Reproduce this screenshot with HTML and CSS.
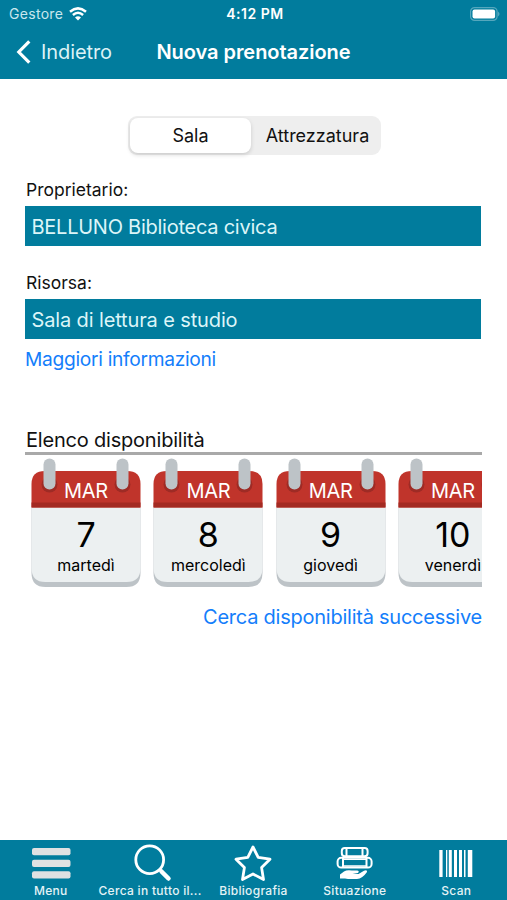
FILE: index.html
```html
<!DOCTYPE html>
<html lang="it">
<head>
    <meta charset="UTF-8">
    <meta name="viewport" content="width=device-width, initial-scale=1.0">
    <title>Nuova prenotazione</title>
    <link rel="stylesheet" href="styles.css">
</head>
<body>
    <!-- Calendar page shared by all the days -->
    <svg class="defs" width="0" height="0">
        <symbol id="calendar" viewBox="0 0 110 130">
            <path d="M0.5 50H109.5V115Q109.5 129 95.5 129H14.5Q0.5 129 0.5 115Z" fill="#bdc3c7"/>
            <path d="M0.5 49H109.5V110Q109.5 124 95.5 124H14.5Q0.5 124 0.5 110Z" fill="#ecf0f1"/>
            <path d="M14 13H96Q109.5 13 109.5 26V49.5H0.5V26Q0.5 13 14 13Z" fill="#c0342b"/>
            <path d="M0.5 44.5H109.5V49.5H0.5Z" fill="#a32a22"/>
            <circle cx="18.5" cy="26.5" r="8" fill="#9e2b25"/>
            <circle cx="91.5" cy="26.5" r="8" fill="#9e2b25"/>
            <rect x="12.5" y="0.5" width="12" height="31" rx="6" fill="#bdc3c7"/>
            <rect x="85.5" y="0.5" width="12" height="31" rx="6" fill="#bdc3c7"/>
        </symbol>
    </svg>

    <div class="app">
        <header class="header">
            <div class="status">
                <div class="carrier">
                    <span class="carrier-name">Gestore</span>
                    <svg width="18" height="14" viewBox="0 0 18 14" fill="none" stroke="#fff" stroke-width="2.5">
                        <path d="M1 4.7Q9 -2 17 4.7M3.9 8Q9 3.6 14.1 8"/>
                        <path d="M9 13.5L6 10.4Q9 8 12 10.4Z" fill="#fff" stroke="none"/>
                    </svg>
                </div>
                <span class="time">4:12 PM</span>
                <svg class="battery" width="31" height="14" viewBox="0 0 31 14">
                    <rect x="0.6" y="0.6" width="26.5" height="12.8" rx="4" fill="none" stroke="#55a7bd" stroke-width="1.2"/>
                    <rect x="2.5" y="2.5" width="22.6" height="9" rx="2" fill="#fff"/>
                    <path d="M28.3 4.5Q30.5 7 28.3 9.5Z" fill="#74b8cb"/>
                </svg>
            </div>
            <div class="nav">
                <div class="back">
                    <svg width="16" height="24" viewBox="0 0 16 24" fill="none" stroke="#fff" stroke-width="3.2">
                        <path d="M13.3 1.3L2.8 12L13.3 22.7"/>
                    </svg>
                    <span>Indietro</span>
                </div>
                <h1>Nuova prenotazione</h1>
                <div></div>
            </div>
        </header>

        <main class="content">
            <div class="segmented">
                <div class="segment active">Sala</div>
                <div class="segment">Attrezzatura</div>
            </div>

            <div class="label">Proprietario:</div>
            <div class="field"><span class="owner">BELLUNO Biblioteca civica</span></div>
            <div class="label second">Risorsa:</div>
            <div class="field"><span class="resource">Sala di lettura e studio</span></div>
            <div class="info"><a href="#">Maggiori informazioni</a></div>

            <h2>Elenco disponibilità</h2>
            <div class="days">
                <div class="day">
                    <svg class="page"><use href="#calendar"/></svg>
                    <span class="month">MAR</span>
                    <span class="number">7</span>
                    <span class="weekday">martedì</span>
                </div>
                <div class="day">
                    <svg class="page"><use href="#calendar"/></svg>
                    <span class="month">MAR</span>
                    <span class="number">8</span>
                    <span class="weekday">mercoledì</span>
                </div>
                <div class="day">
                    <svg class="page"><use href="#calendar"/></svg>
                    <span class="month">MAR</span>
                    <span class="number">9</span>
                    <span class="weekday">giovedì</span>
                </div>
                <div class="day">
                    <svg class="page"><use href="#calendar"/></svg>
                    <span class="month">MAR</span>
                    <span class="number">10</span>
                    <span class="weekday">venerdì</span>
                </div>
            </div>
            <div class="more"><a href="#">Cerca disponibilità successive</a></div>
        </main>

        <footer class="tabbar">
            <div class="tab">
                <svg width="40" height="40" viewBox="0 0 40 40" fill="#e0e1e2">
                    <rect x="1" y="5" width="38.5" height="7.3" rx="2"/>
                    <rect x="1" y="16.7" width="38.5" height="7.3" rx="2"/>
                    <rect x="1" y="28.2" width="38.5" height="7.3" rx="2"/>
                </svg>
                <span>Menu</span>
            </div>
            <div class="tab">
                <svg width="40" height="40" viewBox="0 0 40 40" fill="none" stroke="#fff">
                    <circle cx="17.7" cy="16.7" r="13.9" stroke-width="2.8"/>
                    <path d="M27.5 26.5L30 29" stroke-width="2.5"/>
                    <path d="M29.5 28.5L36.5 35.5" stroke-width="4.5" stroke-linecap="round"/>
                </svg>
                <span class="search-label">Cerca in tutto il...</span>
            </div>
            <div class="tab">
                <svg width="40" height="40" viewBox="0 0 40 40" fill="none" stroke="#fff" stroke-width="2.8" stroke-linejoin="round">
                    <path d="M20 4L25.2 14.4L37 16.2L28.6 24.6L30.5 36.5L20 31L9.5 36.5L11.4 24.6L3 16.2L14.8 14.4Z"/>
                </svg>
                <span>Bibliografia</span>
            </div>
            <div class="tab">
                <svg width="40" height="40" viewBox="0 0 40 40" fill="none" stroke="#fff" stroke-width="2">
                    <rect x="6.8" y="5" width="25.8" height="8.2" rx="3"/>
                    <path d="M11.5 5V13M27.5 5V13"/>
                    <rect x="2.6" y="14.8" width="34" height="9.8" rx="3.6"/>
                    <path d="M8 15V24.5M31.5 15V24.5"/>
                    <path d="M8 16.4H31.5M8 23H31.5" stroke-width="1.3"/>
                    <path d="M5 31.5L9 28.5Q12 26.5 17 27.5H22Q25 28 23 30L17.5 31H23.5L29 27.8Q32.5 26.5 32 29Q27.5 35.5 22 36H13L10 35.5H5Z" fill="#fff" stroke="none"/>
                </svg>
                <span>Situazione</span>
            </div>
            <div class="tab">
                <svg width="40" height="40" viewBox="0 0 40 40" fill="#fff">
                    <path d="M3.3 7h3.3v27h-3.3zM10 7h1.3v27h-1.3zM12.8 7h3v27h-3zM18 7h3v27h-3zM23 7h3v27h-3zM28 7h1.5v27h-1.5zM31.8 7h4.5v27h-4.5z"/>
                </svg>
                <span>Scan</span>
            </div>
        </footer>
    </div>
</body>
</html>
```
FILE: styles.css
```css
body {
    font-family: Inter, "Liberation Sans", sans-serif;
    background: #fff;
    color: #111;
    margin: 0;
}
.defs {
    position: absolute;
}
.app {
    display: flex;
    flex-direction: column;
    height: 900px;
}
span, a, h1, h2 {
    white-space: nowrap;
}
a {
    color: #147efb;
    text-decoration: none;
}
svg {
    flex: none;
}
.header {
    background: #017c9d;
    color: #fff;
    height: 79px;
}
.status {
    display: grid;
    grid-template-columns: 1fr auto 1fr;
    align-items: center;
    height: 27px;
    padding: 0 6px 0 9px;
    font-size: 14px;
}
.carrier {
    display: flex;
    align-items: center;
    gap: 6px;
}
.carrier-name {
    color: #c9e7ee;
    letter-spacing: 0.3px;
}
.time {
    font-weight: 600;
    letter-spacing: 0.5px;
}
.battery {
    justify-self: end;
}
.nav {
    display: grid;
    grid-template-columns: 1fr auto 1fr;
    align-items: center;
    height: 50.5px;
    padding: 0 16px;
}
.back {
    display: flex;
    align-items: center;
    gap: 9px;
    font-size: 20px;
    letter-spacing: -0.1px;
    color: #dcf2f6;
}
h1 {
    margin: 0;
    font-size: 20px;
    font-weight: 600;
    letter-spacing: -0.05px;
}
.content {
    flex: 1;
    padding: 37px 26px 0 25px;
}
.segmented {
    display: grid;
    grid-template-columns: 121px 1fr;
    box-sizing: border-box;
    width: 253px;
    height: 39px;
    margin-left: 103px;
    padding: 2px;
    border-radius: 9px;
    background: #eee;
    font-size: 18px;
}
.segment {
    display: flex;
    align-items: center;
    justify-content: center;
    padding-left: 5px;
}
.segment.active {
    padding: 0;
    border-radius: 8px;
    background: #fff;
    box-shadow: 0 2px 4px rgba(0, 0, 0, 0.15);
}
.label {
    height: 32px;
    margin-top: 19px;
    padding-left: 1px;
    line-height: 31px;
    font-size: 17.5px;
}
.label.second {
    margin-top: 21px;
}
.field {
    height: 40px;
    line-height: 42px;
    padding-left: 6.5px;
    background: #017c9d;
    color: #dcf5f8;
    font-size: 20px;
}
.owner {
    letter-spacing: -0.25px;
}
.resource {
    letter-spacing: -0.13px;
}
.info {
    height: 40px;
    line-height: 41px;
    font-size: 19.2px;
    letter-spacing: -0.3px;
}
h2 {
    margin: 48px -1px 0 0;
    padding-left: 1px;
    height: 25px;
    line-height: 26px;
    border-bottom: 3px solid #a9a9a9;
    font-size: 20px;
    font-weight: 400;
    letter-spacing: -0.2px;
}
.days {
    display: flex;
    gap: 12.3px;
    height: 130px;
    margin: 3px -1px 0 0;
    padding-left: 6px;
    overflow: hidden;
}
.day {
    position: relative;
    display: flex;
    flex: none;
    flex-direction: column;
    align-items: center;
    width: 110px;
    height: 130px;
    color: #000;
}
.page {
    position: absolute;
    width: 110px;
    height: 130px;
    z-index: -1;
}
.month {
    margin-top: 21px;
    height: 24px;
    line-height: 24px;
    font-size: 20px;
    letter-spacing: -0.3px;
    color: #fff;
}
.number {
    margin-top: 12px;
    height: 39px;
    line-height: 40px;
    font-size: 34px;
}
.weekday {
    line-height: 22px;
    font-size: 16px;
}
.more {
    margin-right: -1px;
    line-height: 58px;
    text-align: right;
    font-size: 20px;
    letter-spacing: -0.24px;
}
.tabbar {
    display: grid;
    grid-template-columns: repeat(5, 1fr);
    height: 60px;
    background: #017c9d;
    color: #e4f3f6;
}
.tab {
    display: flex;
    flex-direction: column;
    align-items: center;
    padding-top: 3px;
    min-width: 0;
    font-size: 12px;
    font-weight: 500;
    line-height: 16px;
    letter-spacing: 0.3px;
}
.search-label {
    margin-right: 4px;
}
```
